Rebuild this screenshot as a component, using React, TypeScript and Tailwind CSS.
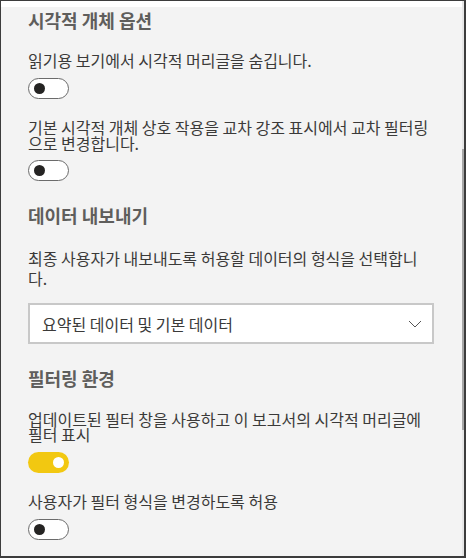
import React from "react";

const font = { fontFamily: '"Noto Sans CJK KR", "Noto Sans", sans-serif' };

function Toggle({ on }: { on?: boolean }) {
  if (on) {
    return (
      <div className="w-[41px] h-[21px] rounded-full bg-[#f2c811] flex items-center justify-end pr-[5px]">
        <div className="w-[11px] h-[11px] rounded-full bg-white" />
      </div>
    );
  }
  return (
    <div className="w-[41px] h-[21px] rounded-full border border-[#6b6b6b] bg-white flex items-center pl-[5px]">
      <div className="w-[11px] h-[11px] rounded-full bg-[#252423]" />
    </div>
  );
}

export default function App() {
  return (
    <div
      className="w-[466px] h-[558px] relative overflow-hidden bg-[#f3f3f3] border-l border-t border-r-2 border-b-2 border-[#3c3c3c]"
      style={font}
    >
      <div className="h-[6px] bg-white" />
      <div className="pl-[27px] w-[440px] flex flex-col items-start">
        <h2 className="mt-[1px] text-[18px] leading-[24px] font-bold text-[#5f5e5c]">시각적 개체 옵션</h2>
        <p className="mt-[20px] text-[16px] leading-[16px] text-[#3b3a39]">읽기용 보기에서 시각적 머리글을 숨깁니다.</p>
        <div className="mt-[10px]"><Toggle /></div>
        <p className="mt-[20px] w-[408px] text-[16px] leading-[16px] text-[#3b3a39] [word-break:keep-all]">
          기본 시각적 개체 상호 작용을 교차 강조 표시에서 교차 필터링 으로 변경합니다.
        </p>
        <div className="mt-[9px]"><Toggle /></div>

        <h2 className="mt-[22px] text-[18px] leading-[24px] font-bold text-[#5f5e5c]">데이터 내보내기</h2>
        <p className="mt-[21px] w-[405px] text-[16px] leading-[20px] text-[#3b3a39]">
          최종 사용자가 내보내도록 허용할 데이터의 형식을 선택합니다.
        </p>
        <div className="mt-[15px] w-[406px] h-[41px] border-2 border-[#c8c8c8] bg-white flex items-center justify-between pl-[12px] pr-[10px]">
          <span className="text-[16px] leading-[20px] text-[#3b3a39]">요약된 데이터 및 기본 데이터</span>
          <svg width="14" height="8" viewBox="0 0 14 8" fill="none">
            <path d="M1 1 L7 7 L13 1" stroke="#555" strokeWidth="1" />
          </svg>
        </div>

        <h2 className="mt-[22px] text-[18px] leading-[24px] font-bold text-[#5f5e5c]">필터링 환경</h2>
        <p className="mt-[22px] w-[405px] text-[16px] leading-[15px] text-[#3b3a39]">
          업데이트된 필터 창을 사용하고 이 보고서의 시각적 머리글에 필터 표시
        </p>
        <div className="mt-[10px]"><Toggle on /></div>
        <p className="mt-[20px] text-[16px] leading-[16px] text-[#3b3a39]">사용자가 필터 형식을 변경하도록 허용</p>
        <div className="mt-[10px]"><Toggle /></div>
      </div>

      <div className="absolute right-0 top-0 bottom-0 w-[2px] bg-[#e6e6e6]" />
      <div className="absolute right-0 top-[148px] h-[281px] w-[2px] bg-[#a6a6a6]" />
    </div>
  );
}
